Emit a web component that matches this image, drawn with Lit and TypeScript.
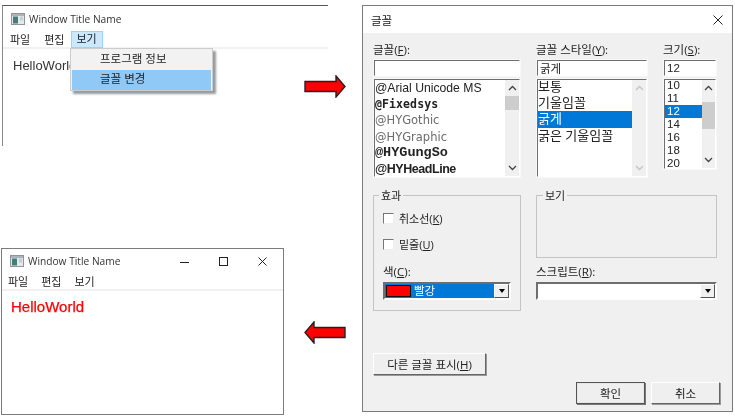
import { LitElement, html, css, svg } from "lit";
import { customElement } from "lit/decorators.js";

const KO = css`"Open Sans", "Noto Sans CJK KR", sans-serif`;

const winIcon = html`<svg class="wicon" width="14" height="12" viewBox="0 0 14 12">
  <rect x="0.5" y="0.5" width="13" height="11" fill="#e4e8ea" stroke="#8d9599"/>
  <rect x="1" y="1" width="12" height="2" fill="#aab4ba"/>
  <rect x="2" y="3.5" width="5" height="7" fill="#3f7f78"/>
  <rect x="9" y="3.5" width="3" height="4" fill="#c6ced2"/>
</svg>`;

const arrowPath = svg`<path d="M1 6.5 H32 V1 L41 11.5 L32 22 V16.5 H1 Z" fill="#ff0000" stroke="#222" stroke-width="1.4"/>`;

const chevUp = html`<svg width="9" height="6" viewBox="0 0 9 6"><path d="M1 5 L4.5 1.5 L8 5" fill="none" stroke="currentColor" stroke-width="1.3"/></svg>`;
const chevDown = html`<svg width="9" height="6" viewBox="0 0 9 6"><path d="M1 1 L4.5 4.5 L8 1" fill="none" stroke="currentColor" stroke-width="1.3"/></svg>`;

@customElement("app-root")
export class AppRoot extends LitElement {
  static styles = css`
    :host { display: block; position: relative; width: 735px; height: 416px; background: #fff; overflow: hidden; font-family: ${KO}; color: #222; font-size: 11.5px; }
    * { box-sizing: border-box; }
    .canvas-item { position: absolute; }
    .blur { filter: blur(0.35px); }

    .w1 { left: 2px; top: 5px; width: 326px; height: 141px; border-top: 1px solid #555; border-left: 1px solid #888; background: #fff; }
    .w2 { left: 1px; top: 248px; width: 283px; height: 167px; border: 1px solid #7c7c7c; background: #fff; }
    .title { display: flex; align-items: center; font-size: 10.2px; color: #333; }
    .w1 .title { height: 25px; padding: 1px 0 0 8px; }
    .w2 .title { height: 24px; padding: 0 0 0 8px; }
    .wicon { margin-right: 4px; flex: none; }
    .ctl { margin-left: auto; display: flex; padding-right: 16px; }
    .ctl svg { display: block; margin-left: 30px; }
    .menu { display: flex; border-bottom: 2px solid #f1f1f1; font-size: 11px; height: 18px; align-items: center; color: #222; white-space: nowrap; }
    .w1 .menu { padding-left: 7px; gap: 14px; height: 18px; }
    .w2 .menu { padding-left: 6px; gap: 13px; height: 18px; padding-bottom: 1px; }
    .hl { background: #cce8ff; outline: 1px solid #99d1ff; outline-offset: -1px; padding: 0 6px; margin-left: -8px; height: 17px; line-height: 16px; width: 32px; flex: none; }
    .hello { font-family: "Liberation Sans", sans-serif; }
    .w1 .hello { font-size: 13px; padding: 9px 0 0 10px; color: #333; }
    .w2 .hello { font-size: 15px; padding: 7px 0 0 9px; color: #ff0000; -webkit-text-stroke: 0.25px #ff0000; }

    .popup { left: 70px; top: 48px; width: 143px; height: 43px; background: #f2f2f2; border: 1px solid #ccc; padding: 1px; box-shadow: 3px 3px 2px #9a9a9a; font-size: 11.5px; color: #222; }
    .popup div { height: 19px; line-height: 18px; padding-left: 28px; }
    .popup .sel { background: #90c8f6; margin-top: 1px; height: 20px; }

    .arrow { left: 304px; width: 42px; height: 23px; }
    .arrow.a1 { top: 75px; }
    .arrow.a2 { top: 321px; transform: scaleX(-1); }

    .dlg { left: 362px; top: 5px; width: 371px; height: 407px; border: 1px solid #7b7b7b; background: #f0f0f0; display: flex; flex-direction: column; font-size: 11.5px; color: #222; }
    .dlg-t { background: #fff; height: 27px; flex: none; display: flex; align-items: center; justify-content: space-between; padding: 0 9px 0 8px; }
    .dlg-b { padding: 8px 15px 0 10px; flex: 1; display: flex; flex-direction: column; }
    .cols { display: grid; grid-template-columns: 148px 112px 54px; column-gap: 15px; }
    .col { display: flex; flex-direction: column; }
    .lbl { height: 17px; line-height: 15px; }
    .cols .lbl { height: 18px; line-height: 17px; }
    u { text-decoration: underline; }
    .sunken { border: 2px solid; border-color: #6e6e6e #fff #fff #6e6e6e; outline: 1px solid #f8f8f8; outline-offset: -1px; background: #fff; }
    .inp { height: 18px; line-height: 15px; padding: 0 0 0 2px; margin-bottom: 1px; font-size: 11.5px; }
    .list { display: flex; overflow: hidden; border-top-color: #6e6e6e; }
    .col1 .list, .col2 .list { height: 100px; }
    .col3 .list { height: 92px; }
    .items { flex: 1; min-width: 0; }
    .col1 .it { height: 16.2px; line-height: 16px; font-size: 12.2px; white-space: nowrap; }
    .col2 .it { height: 16.2px; line-height: 14.5px; font-size: 13px; white-space: nowrap; }
    .col2 .items { margin-top: -1px; }
    .col3 .it { height: 13px; line-height: 13px; font-size: 11.5px; padding-left: 2px; font-family: "Liberation Sans", sans-serif; }
    .col3 .items { margin-top: -1px; }
    .on { background: #0078d7; color: #fff; }
    .sb { width: 14px; flex: none; background: #f0f0f0; display: flex; flex-direction: column; align-items: center; color: #444; }
    .sb svg { flex: none; margin: 5px 0; }
    .sb.dis { color: #c4c4c4; }
    .sb.wide { width: 13px; }
    .grow { flex: 1; width: 100%; }
    .thumb { width: 100%; background: #cdcdcd; }
    .fixed { font-family: "DejaVu Sans Mono", monospace; font-weight: 700; font-size: 11.5px !important; letter-spacing: 0.1px; }
    .goth { font-family: "DejaVu Sans", sans-serif; color: #6b6b6b; font-size: 11.5px !important; }
    .gung { font-family: "Liberation Mono", monospace; font-weight: 700; font-size: 13.5px !important; }
    .head { font-family: "Liberation Sans", sans-serif; font-weight: 700; font-size: 12.5px !important; letter-spacing: -0.45px; }

    .lower { display: grid; grid-template-columns: 148px 181px; column-gap: 15px; margin-top: 17px; }
    .group { border: 1px solid #c4c4c4; position: relative; }
    .legend { position: absolute; top: -8px; left: 6px; background: #f0f0f0; padding: 0 2px; line-height: 15px; font-size: 11px; }
    .fx .legend { left: 5px; }
    .fx { height: 116px; padding: 12px 9px 0 9px; display: flex; flex-direction: column; }
    .chk { display: flex; align-items: center; gap: 5px; height: 20px; margin-bottom: 6px; font-size: 11px; }
    .box { width: 11px; height: 11px; background: #fff; border: 1px solid; border-color: #777 #eee #eee #777; flex: none; }
    .right { display: flex; flex-direction: column; }
    .preview { height: 63px; }
    .right .lbl { margin-top: 6px; height: 18px; }
    .combo { height: 18px; display: flex; align-items: stretch; background: #fff; border: 2px solid; border-color: #6e6e6e #fff #fff #6e6e6e; }
    .fx .combo { width: 128px; }
    .fx .lbl { height: 18px; margin-top: 4px; }
    .val { flex: 1; display: flex; align-items: center; gap: 3px; color: #fff; background: #0078d7; padding-left: 1px; line-height: 14px; }
    .val.empty { background: #fff; }
    .swatch { width: 25px; height: 12px; background: #f00; border: 1px solid #111; flex: none; }
    .drop { width: 15px; flex: none; background: #f0f0f0; border: 1px solid; border-color: #fff #555 #555 #fff; display: flex; align-items: center; justify-content: center; }
    .drop i { width: 0; height: 0; border: 3.5px solid transparent; border-top: 4px solid #000; border-bottom: 0; }

    .btn { background: #efefef; border: 1px solid; border-color: #fff #666 #666 #fff; box-shadow: 1px 1px 0 #999; display: flex; align-items: center; justify-content: center; font-size: 11.5px; color: #222; }
    .more { width: 113px; height: 22px; margin-top: 42px; }
    .foot { display: flex; justify-content: flex-end; gap: 6px; margin-top: 7px; margin-right: -3px; }
    .foot .btn { width: 69px; height: 22px; }
    .foot .def { border: 1px solid #555; box-shadow: inset 0 0 0 1px #e6e6e6, 1px 1px 0 #777; }
  `;

  render() {
    return html`
      <div class="canvas-item w1 blur">
        <div class="title">${winIcon}<span>Window Title Name</span></div>
        <div class="menu"><span>파일</span><span>편집</span><span class="hl">보기</span></div>
        <div class="hello">HelloWorld</div>
      </div>
      <div class="canvas-item popup blur">
        <div>프로그램 정보</div>
        <div class="sel">글꼴 변경</div>
      </div>
      <svg class="canvas-item arrow a1" viewBox="0 0 42 23">${arrowPath}</svg>

      <div class="canvas-item w2 blur">
        <div class="title">${winIcon}<span>Window Title Name</span>
          <div class="ctl">
            <svg width="9" height="9" viewBox="0 0 9 9"><path d="M0 5.5H9" stroke="#222" stroke-width="1"/></svg>
            <svg width="9" height="9" viewBox="0 0 9 9"><rect x="0.5" y="0.5" width="8" height="8" fill="none" stroke="#222"/></svg>
            <svg width="9" height="9" viewBox="0 0 9 9"><path d="M0.5 0.5L8.5 8.5M8.5 0.5L0.5 8.5" stroke="#222" stroke-width="1"/></svg>
          </div>
        </div>
        <div class="menu"><span>파일</span><span>편집</span><span>보기</span></div>
        <div class="hello">HelloWorld</div>
      </div>
      <svg class="canvas-item arrow a2" viewBox="0 0 42 23">${arrowPath}</svg>

      <div class="canvas-item dlg blur">
        <div class="dlg-t"><span>글꼴</span>
          <svg width="10" height="10" viewBox="0 0 10 10"><path d="M0.5 0.5L9.5 9.5M9.5 0.5L0.5 9.5" stroke="#222" stroke-width="1"/></svg>
        </div>
        <div class="dlg-b">
          <div class="cols">
            <div class="col col1">
              <div class="lbl">글꼴(<u>F</u>):</div>
              <div class="sunken inp"></div>
              <div class="sunken list">
                <div class="items">
                  <div class="it hello">@Arial Unicode MS</div>
                  <div class="it fixed">@Fixedsys</div>
                  <div class="it goth">@HYGothic</div>
                  <div class="it goth">@HYGraphic</div>
                  <div class="it gung">@HYGungSo</div>
                  <div class="it head">@HYHeadLine</div>
                </div>
                <div class="sb">${chevUp}<div class="thumb" style="height:14px"></div><div class="grow"></div>${chevDown}</div>
              </div>
            </div>
            <div class="col col2">
              <div class="lbl">글꼴 스타일(<u>Y</u>):</div>
              <div class="sunken inp">굵게</div>
              <div class="sunken list">
                <div class="items">
                  <div class="it">보통</div>
                  <div class="it">기울임꼴</div>
                  <div class="it on">굵게</div>
                  <div class="it">굵은 기울임꼴</div>
                </div>
                <div class="sb dis">${chevUp}<div class="grow"></div>${chevDown}</div>
              </div>
            </div>
            <div class="col col3">
              <div class="lbl">크기(<u>S</u>):</div>
              <div class="sunken inp" style="font-family:'Liberation Sans',sans-serif">12</div>
              <div class="sunken list">
                <div class="items">
                  <div class="it">10</div>
                  <div class="it">11</div>
                  <div class="it on">12</div>
                  <div class="it">14</div>
                  <div class="it">16</div>
                  <div class="it">18</div>
                  <div class="it">20</div>
                </div>
                <div class="sb wide">${chevUp}<div class="grow" style="flex:0 0 6px"></div><div class="thumb" style="height:27px"></div><div class="grow"></div>${chevDown}</div>
              </div>
            </div>
          </div>
          <div class="lower">
            <div class="group fx">
              <div class="legend">효과</div>
              <div class="chk"><span class="box"></span><span>취소선(<u>K</u>)</span></div>
              <div class="chk"><span class="box"></span><span>밑줄(<u>U</u>)</span></div>
              <div class="lbl">색(<u>C</u>):</div>
              <div class="combo">
                <div class="val"><span class="swatch"></span><span>빨강</span></div>
                <div class="drop"><i></i></div>
              </div>
            </div>
            <div class="right">
              <div class="group preview"><div class="legend">보기</div></div>
              <div class="lbl">스크립트(<u>R</u>):</div>
              <div class="combo">
                <div class="val empty"></div>
                <div class="drop"><i></i></div>
              </div>
            </div>
          </div>
          <div class="btn more">다른 글꼴 표시(<u>H</u>)</div>
          <div class="foot">
            <div class="btn def">확인</div>
            <div class="btn">취소</div>
          </div>
        </div>
      </div>
    `;
  }
}
